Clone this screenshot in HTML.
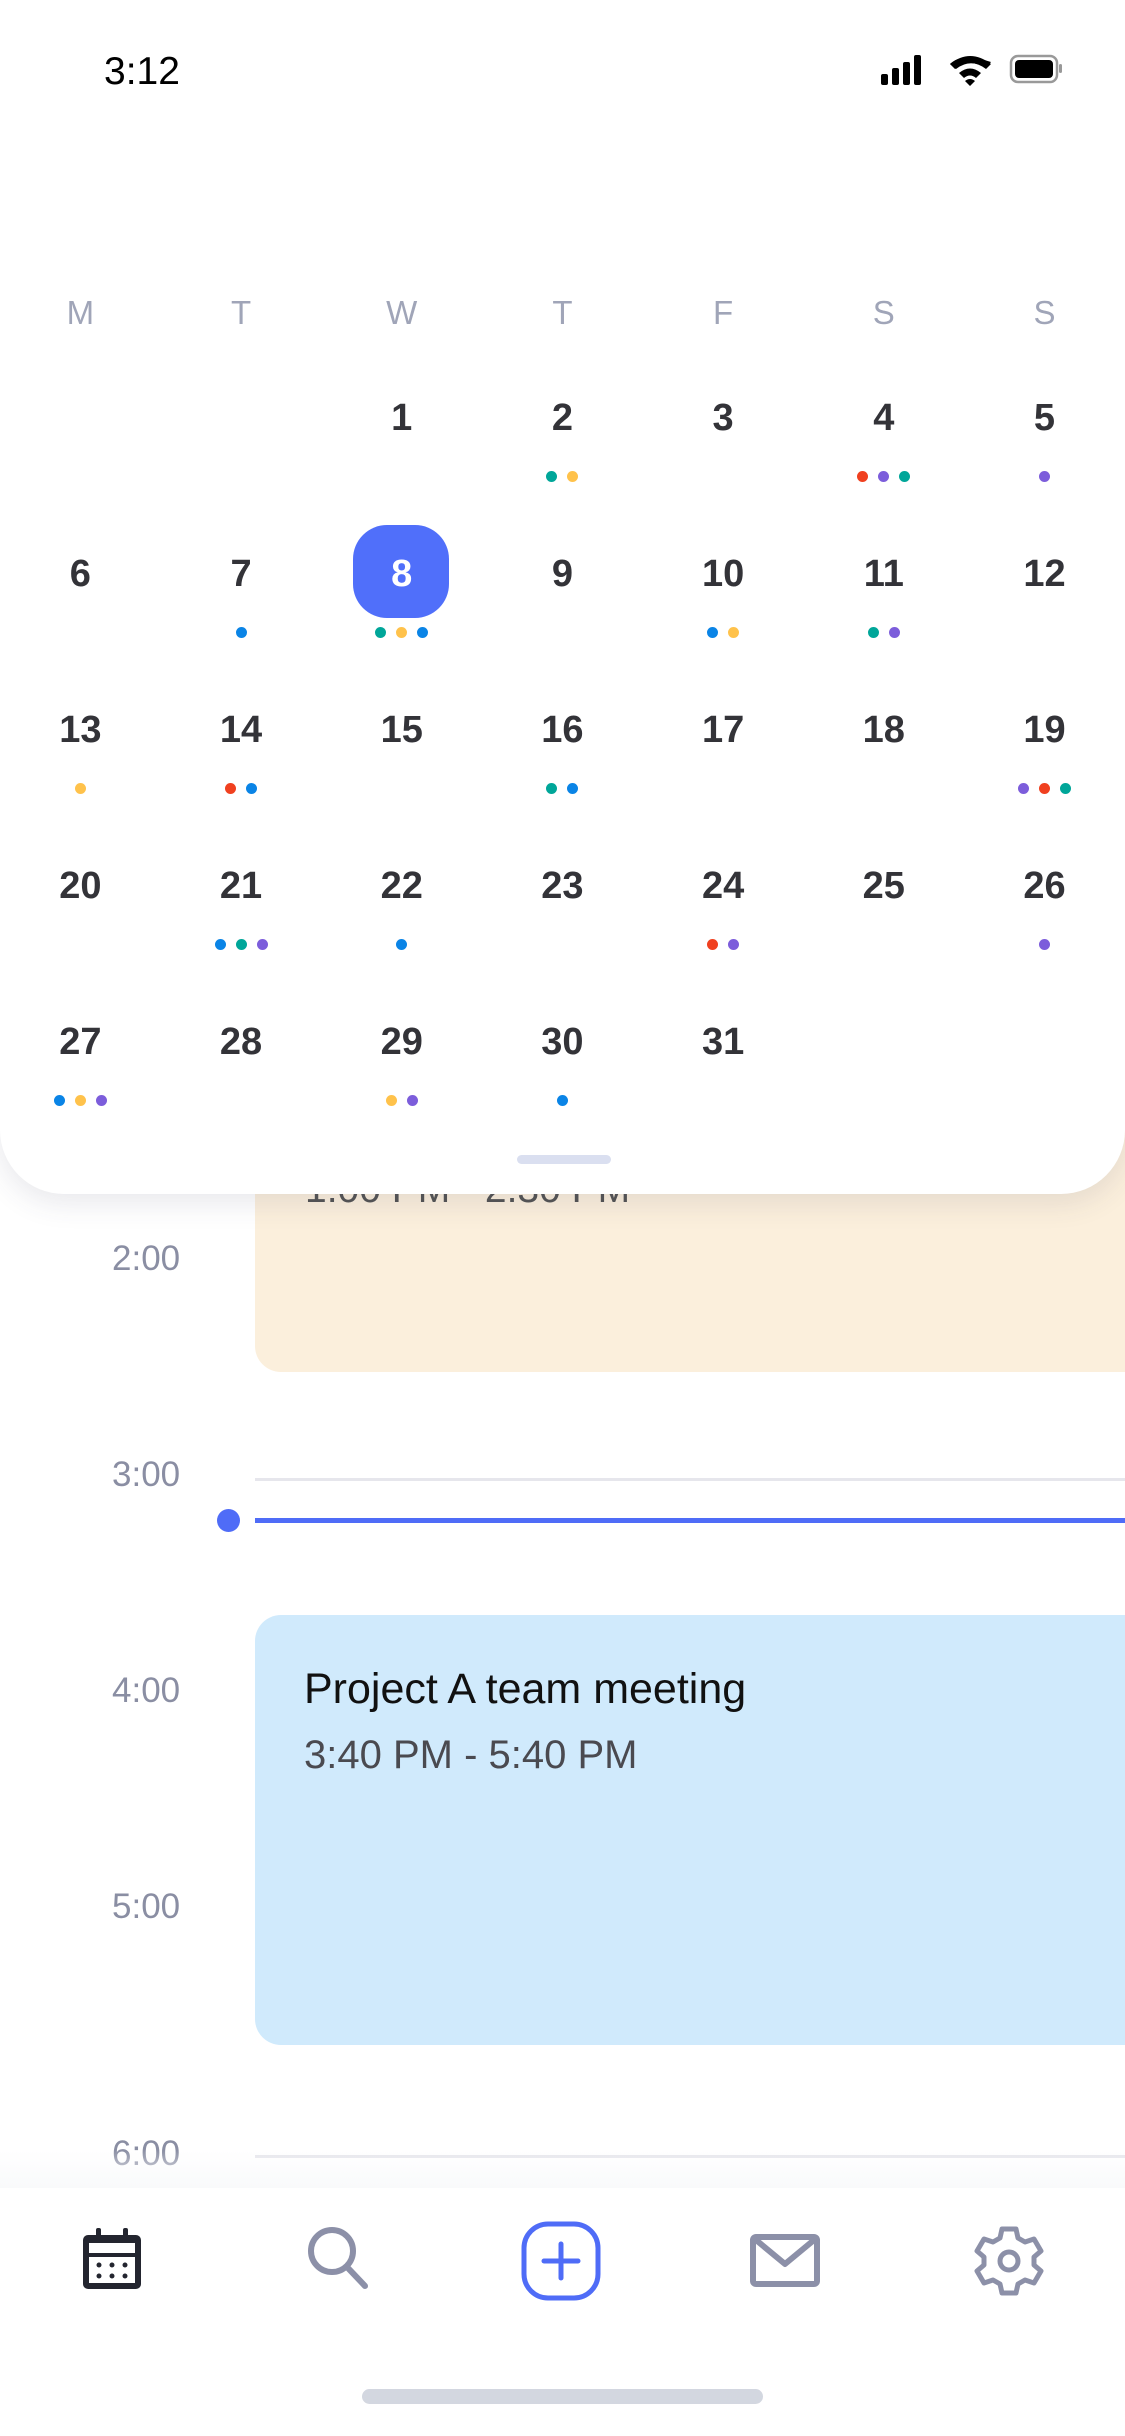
<!DOCTYPE html>
<html><head><meta charset="utf-8"><style>
*{margin:0;padding:0;box-sizing:border-box}
body{width:1125px;height:2436px;position:relative;overflow:hidden;background:#fff;font-family:"Liberation Sans",sans-serif}
.abs{position:absolute}
.card{position:absolute;left:0;top:0;width:1125px;height:1194px;background:#fff;border-radius:0 0 64px 64px;box-shadow:0 8px 30px rgba(60,60,90,0.12);z-index:5}
.wk{position:absolute;top:294px;left:0;width:1125px;display:flex}
.wk div{width:160.7px;text-align:center;font-size:33px;color:#a0a5b8}
.grid{position:absolute;top:338px;left:0;width:1125px;display:grid;grid-template-columns:repeat(7,160.7px);grid-auto-rows:156px}
.c{text-align:center;padding-top:58px;position:relative}
.n{font-size:38px;line-height:44px;font-weight:600;color:#333338;height:44px;position:relative}
.d{margin-top:31px;height:12px;display:flex;justify-content:center;gap:10px}
.d i{width:11px;height:11px;border-radius:50%;display:block}
.t{background:#00a699}.y{background:#ffc24b}.r{background:#f0401f}.p{background:#7c5ddb}.b{background:#0a84e6}
.sel{position:absolute;left:32px;top:31px;width:96px;height:93px;background:#506ffa;border-radius:34px}
.time{position:absolute;left:112px;font-size:35px;color:#8a8ea3}
</style></head><body>
<div class="card">
  <div class="abs" style="left:104px;top:50px;font-size:39px;color:#000">3:12</div>
  <svg class="abs" style="left:880px;top:52px" width="200" height="36" viewBox="0 0 200 36">
    <rect x="1" y="22" width="7" height="11" rx="2" fill="#000"/><rect x="12" y="16" width="7" height="17" rx="2" fill="#000"/><rect x="23" y="10" width="7" height="23" rx="2" fill="#000"/><rect x="34" y="3" width="7" height="30" rx="2" fill="#000"/>
    <path d="M70 12 Q82 0 111 10 L106 16 Q90 6 76 17Z" fill="#000"/>
    <path d="M70 12 Q90 -4 111 12 L106 17 Q90 5 75 17Z M79 21 Q90 12 101 21 L96 26 Q90 21 84 26Z M90 34 L85 29 Q90 25 95 29Z" fill="#000"/>
    <rect x="131" y="4" width="46" height="26" rx="7" fill="none" stroke="#999" stroke-width="2.5"/><rect x="135" y="8" width="38" height="18" rx="4" fill="#000"/><rect x="179" y="12" width="3" height="9" rx="1.5" fill="#999"/>
  </svg>
  <div class="wk"><div>M</div><div>T</div><div>W</div><div>T</div><div>F</div><div>S</div><div>S</div></div>
  <div class="grid">
    <div class="c"></div><div class="c"></div>
    <div class="c"><div class="n">1</div></div>
    <div class="c"><div class="n">2</div><div class="d"><i class="t"></i><i class="y"></i></div></div>
    <div class="c"><div class="n">3</div></div>
    <div class="c"><div class="n">4</div><div class="d"><i class="r"></i><i class="p"></i><i class="t"></i></div></div>
    <div class="c"><div class="n">5</div><div class="d"><i class="p"></i></div></div>

    <div class="c"><div class="n">6</div></div>
    <div class="c"><div class="n">7</div><div class="d"><i class="b"></i></div></div>
    <div class="c"><div class="sel"></div><div class="n" style="color:#fff">8</div><div class="d" style="position:relative"><i class="t"></i><i class="y"></i><i class="b"></i></div></div>
    <div class="c"><div class="n">9</div></div>
    <div class="c"><div class="n">10</div><div class="d"><i class="b"></i><i class="y"></i></div></div>
    <div class="c"><div class="n">11</div><div class="d"><i class="t"></i><i class="p"></i></div></div>
    <div class="c"><div class="n">12</div></div>

    <div class="c"><div class="n">13</div><div class="d"><i class="y"></i></div></div>
    <div class="c"><div class="n">14</div><div class="d"><i class="r"></i><i class="b"></i></div></div>
    <div class="c"><div class="n">15</div></div>
    <div class="c"><div class="n">16</div><div class="d"><i class="t"></i><i class="b"></i></div></div>
    <div class="c"><div class="n">17</div></div>
    <div class="c"><div class="n">18</div></div>
    <div class="c"><div class="n">19</div><div class="d"><i class="p"></i><i class="r"></i><i class="t"></i></div></div>

    <div class="c"><div class="n">20</div></div>
    <div class="c"><div class="n">21</div><div class="d"><i class="b"></i><i class="t"></i><i class="p"></i></div></div>
    <div class="c"><div class="n">22</div><div class="d"><i class="b"></i></div></div>
    <div class="c"><div class="n">23</div></div>
    <div class="c"><div class="n">24</div><div class="d"><i class="r"></i><i class="p"></i></div></div>
    <div class="c"><div class="n">25</div></div>
    <div class="c"><div class="n">26</div><div class="d"><i class="p"></i></div></div>

    <div class="c"><div class="n">27</div><div class="d"><i class="b"></i><i class="y"></i><i class="p"></i></div></div>
    <div class="c"><div class="n">28</div></div>
    <div class="c"><div class="n">29</div><div class="d"><i class="y"></i><i class="p"></i></div></div>
    <div class="c"><div class="n">30</div><div class="d"><i class="b"></i></div></div>
    <div class="c"><div class="n">31</div></div>
  </div>
  <div class="abs" style="left:517px;top:1155px;width:94px;height:9px;border-radius:5px;background:#dadff0"></div>
</div>

<!-- timeline -->
<div class="abs" style="left:255px;top:1100px;width:900px;height:272px;background:#fbefdc;border-radius:0 0 0 26px"></div>
<div class="abs" style="left:305px;top:1168px;font-size:39px;color:#555">1:00 PM - 2:30 PM</div>
<div class="time" style="top:1239px">2:00</div>
<div class="time" style="top:1455px">3:00</div>
<div class="abs" style="left:255px;top:1478px;width:870px;height:3px;background:#e6e6ec"></div>
<div class="abs" style="left:255px;top:1518px;width:870px;height:5px;background:#4f6cf7"></div>
<div class="abs" style="left:217px;top:1509px;width:23px;height:23px;border-radius:50%;background:#4f6cf7"></div>
<div class="time" style="top:1671px">4:00</div>
<div class="abs" style="left:255px;top:1615px;width:900px;height:430px;background:#d0eafc;border-radius:26px 0 0 26px"></div>
<div class="abs" style="left:304px;top:1665px;font-size:43px;color:#111">Project A team meeting</div>
<div class="abs" style="left:304px;top:1733px;font-size:40px;color:#4a4a50">3:40 PM - 5:40 PM</div>
<div class="time" style="top:1887px">5:00</div>
<div class="time" style="top:2134px">6:00</div>
<div class="abs" style="left:255px;top:2155px;width:870px;height:3px;background:#e6e6ec"></div>
<div class="abs" style="left:0;top:2150px;width:1125px;height:38px;background:linear-gradient(rgba(250,250,252,0),#f9fafb)"></div>

<!-- tab bar -->
<div class="abs" style="left:0;top:2188px;width:1125px;height:248px;background:#fff"></div>
<svg class="abs" style="left:80px;top:2226px" width="64" height="66" viewBox="0 0 64 66">
  <rect x="3" y="9" width="58" height="54" rx="5" fill="#23252f"/>
  <rect x="9" y="17" width="46" height="10" fill="#fff"/>
  <rect x="9" y="31" width="46" height="26" fill="#fff"/>
  <rect x="16" y="2" width="5" height="12" rx="2" fill="#23252f"/><rect x="43" y="2" width="5" height="12" rx="2" fill="#23252f"/>
  <g fill="#23252f"><circle cx="19" cy="39" r="2.5"/><circle cx="32" cy="39" r="2.5"/><circle cx="45" cy="39" r="2.5"/><circle cx="19" cy="50" r="2.5"/><circle cx="32" cy="50" r="2.5"/><circle cx="45" cy="50" r="2.5"/></g>
</svg>
<svg class="abs" style="left:303px;top:2222px" width="70" height="70" viewBox="0 0 70 70">
  <circle cx="29" cy="29" r="21" fill="none" stroke="#8c90a8" stroke-width="6"/>
  <line x1="44" y1="45" x2="62" y2="64" stroke="#8c90a8" stroke-width="6" stroke-linecap="round"/>
</svg>
<svg class="abs" style="left:520px;top:2220px" width="82" height="82" viewBox="0 0 82 82">
  <rect x="4" y="4" width="74" height="74" rx="24" fill="none" stroke="#4f6cf7" stroke-width="5"/>
  <line x1="41" y1="24" x2="41" y2="58" stroke="#4f6cf7" stroke-width="5" stroke-linecap="round"/>
  <line x1="24" y1="41" x2="58" y2="41" stroke="#4f6cf7" stroke-width="5" stroke-linecap="round"/>
</svg>
<svg class="abs" style="left:750px;top:2234px" width="70" height="54" viewBox="0 0 70 54">
  <rect x="3" y="3" width="64" height="47" rx="3" fill="none" stroke="#8c90a8" stroke-width="6"/>
  <path d="M6 6 L35 30 L64 6" fill="none" stroke="#8c90a8" stroke-width="6" stroke-linejoin="round"/>
</svg>
<svg class="abs" style="left:972px;top:2224px" width="74" height="74" viewBox="0 0 74 74">
  <path d="M30 5 h14 l2 9 l7 4 l9 -3 l7 12 l-7 6 v8 l7 6 l-7 12 l-9 -3 l-7 4 l-2 9 h-14 l-2 -9 l-7 -4 l-9 3 l-7 -12 l7 -6 v-8 l-7 -6 l7 -12 l9 3 l7 -4 z" fill="none" stroke="#8c90a8" stroke-width="5" stroke-linejoin="round"/>
  <circle cx="37" cy="37" r="9" fill="none" stroke="#8c90a8" stroke-width="5"/>
</svg>
<div class="abs" style="left:362px;top:2389px;width:401px;height:15px;border-radius:8px;background:#d3d7e0"></div>
</body></html>
